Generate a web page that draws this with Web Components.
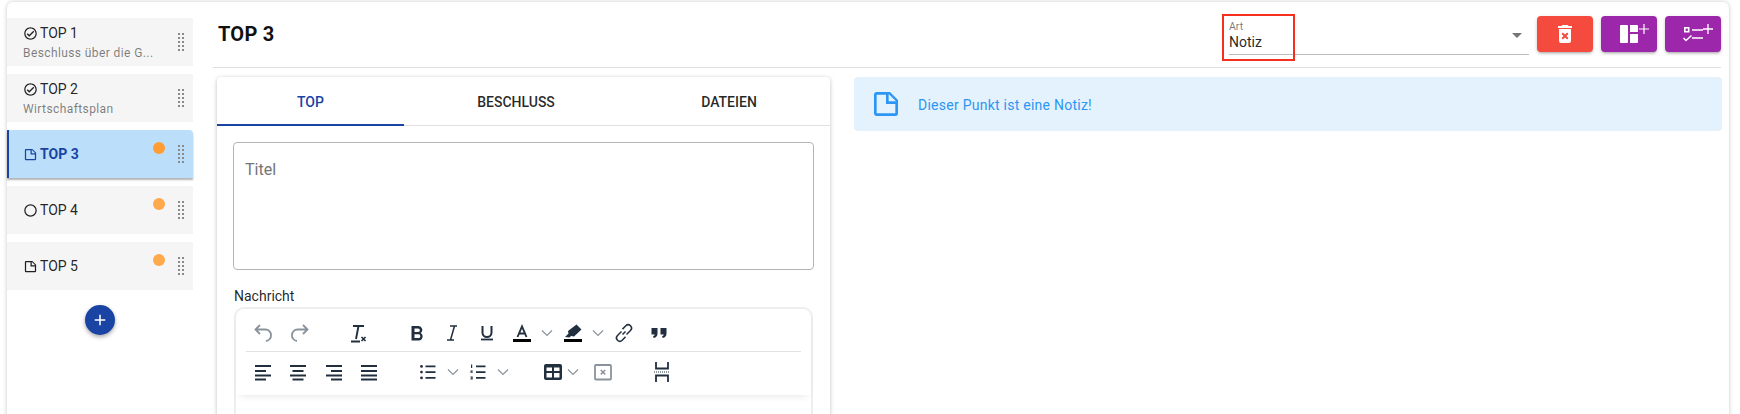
<!DOCTYPE html>
<html lang="de">
<head>
<meta charset="utf-8">
<title>TOP 3</title>
<style>
  html, body { margin: 0; height: 100%; overflow: hidden; background: #fff; }
  body { font-family: Roboto, "Liberation Sans", sans-serif; color: rgba(0,0,0,.87); }
</style>
</head>
<body>
<agenda-page></agenda-page>

<script>
// mdi paths used in more than one place
const ICONS = {
  check: 'M12 2C6.5 2 2 6.5 2 12S6.5 22 12 22 22 17.5 22 12 17.5 2 12 2M12 20C7.59 20 4 16.41 4 12S7.59 4 12 4 20 7.59 20 12 16.41 20 12 20M16.59 7.58L10 14.17L7.41 11.59L6 13L10 17L18 9L16.59 7.58Z',
  circle: 'M12,20A8,8 0 0,1 4,12A8,8 0 0,1 12,4A8,8 0 0,1 20,12A8,8 0 0,1 12,20M12,2A10,10 0 0,0 2,12A10,10 0 0,0 12,22A10,10 0 0,0 22,12A10,10 0 0,0 12,2Z',
  note: 'M14,10H19.5L14,4.5V10M5,3H15L21,9V19A2,2 0 0,1 19,21H5C3.89,21 3,20.1 3,19V5C3,3.89 3.89,3 5,3M5,5V19H19V12H12V5H5Z',
  drag: 'M9,3H11V5H9V3M13,3H15V5H13V3M9,7H11V9H9V7M13,7H15V9H13V7M9,11H11V13H9V11M13,11H15V13H13V11M9,15H11V17H9V15M13,15H15V17H13V15M9,19H11V21H9V19M13,19H15V21H13V19Z',
  trash: 'M6,19A2,2 0 0,0 8,21H16A2,2 0 0,0 18,19V7H6V19M8.46,11.88L9.87,10.47L12,12.59L14.12,10.47L15.53,11.88L13.41,14L15.53,16.12L14.12,17.53L12,15.41L9.87,17.53L8.46,16.12L10.59,14L8.46,11.88M15.5,4L14.5,3H9.5L8.5,4H5V6H19V4H15.5Z',
  plus: 'M19,13H13V19H11V13H5V11H11V5H13V11H19V13Z'
};

const svg = (d, size, fill = 'currentColor') =>
  `<svg width="${size}" height="${size}" viewBox="0 0 24 24" fill="${fill}"><path d="${d}"/></svg>`;

// toolbar glyphs of the editor, all on a 24 box
const TOOLS = {
  undo: '<path d="M9 4 4.500 8.500 9 13M5 8.500h9.500a5.500 5.500 0 0 1 5.500 5.500 5.500 5.500 0 0 1-5 6" fill="none" stroke="#8a939c" stroke-width="1.800"/>',
  redo: '<path d="M15 4l4.500 4.500L15 13M19 8.500H9.500A5.500 5.500 0 0 0 4 14a5.500 5.500 0 0 0 5 6" fill="none" stroke="#8a939c" stroke-width="1.800"/>',
  clear: '<path d="M7 5h11M12.500 5 10 18M5 20.500h9" fill="none" stroke="#222f3e" stroke-width="1.900"/><path d="m15.500 16 4 4m0-4-4 4" fill="none" stroke="#222f3e" stroke-width="1.700"/>',
  bold: '<path d="M6.500 5h7a3.800 3.800 0 0 1 2 7 4 4 0 0 1-1.500 7.500H6.500ZM9.500 7.500v3.600h3.600a1.800 1.800 0 0 0 0-3.600ZM9.500 13.300v3.700h4a1.850 1.850 0 0 0 0-3.700Z" fill="#222f3e" fill-rule="evenodd"/>',
  italic: '<path d="M10 5h7M14.500 5 10.500 19M7 19h7" fill="none" stroke="#222f3e" stroke-width="1.500"/>',
  under: '<path d="M7.500 5v6.500a4.500 4.500 0 0 0 9 0V5" fill="none" stroke="#222f3e" stroke-width="2"/><path d="M6 18.500h12" stroke="#222f3e" stroke-width="1.800"/>',
  color: '<path d="M7.500 16 12 5.500 16.500 16M9 12.500h6" fill="none" stroke="#222f3e" stroke-width="1.900"/><path d="M3 18h18v3H3z" fill="#000"/>',
  mark: '<path d="M15.500 3.500 20.500 8.500l-7.500 7-3-.5-1.500 1.500-4.500-.5 3.500-3.500-.5-2.500z" fill="#222f3e"/><path d="M3 18h18v3H3z" fill="#000"/>',
  link: '<path d="m10.500 13.500 3-3M9.500 10.500 5.500 14.500a3.300 3.300 0 0 0 4.700 4.700l3.300-3.300M14.500 13.500l4-4a3.300 3.300 0 0 0-4.700-4.700L10.500 8.100" fill="none" stroke="#222f3e" stroke-width="1.500"/>',
  quote: '<path d="M4.500 7h6v5.500c0 2.500-1.300 4-3.800 4.500l-.7-1.700c1.100-.3 1.700-.9 1.800-1.800H4.500zM13.500 7h6v5.500c0 2.500-1.300 4-3.800 4.500l-.7-1.700c1.100-.3 1.700-.9 1.800-1.800h-3.300z" fill="#222f3e"/>',
  left: '<path d="M4 5h16v2H4zM4 10h11v2H4zM4 14.500h16v2H4zM4 18.500h11v2H4z" fill="#222f3e"/>',
  center: '<path d="M4 5h16v2H4zM6.500 10h11v2h-11zM4 14.500h16v2H4zM6.500 18.500h11v2h-11z" fill="#222f3e"/>',
  right: '<path d="M4 5h16v2H4zM9 10h11v2H9zM4 14.500h16v2H4zM9 18.500h11v2H9z" fill="#222f3e"/>',
  justify: '<path d="M4 5h16v2H4zM4 10h16v2H4zM4 14.500h16v2H4zM4 18.500h16v2H4z" fill="#222f3e"/>',
  ul: '<path d="M9.500 5.500h10v1.800h-10zM9.500 11.200h10V13h-10zM9.500 17h10v1.800h-10z" fill="#222f3e"/><circle cx="5.500" cy="6.400" r="1.400" fill="#222f3e"/><circle cx="5.500" cy="12.100" r="1.400" fill="#222f3e"/><circle cx="5.500" cy="17.900" r="1.400" fill="#222f3e"/>',
  ol: '<path d="M10 5.500h9.500v1.800H10zM10 11.200h9.500V13H10zM10 17h9.500v1.800H10z" fill="#222f3e"/><path d="M5 4.500h1.200v3.500H5zM4.500 10.500h2.200v.9H5.400v.4h1.300v.9H4.500zM4.500 16.500h2.200v3H4.500v-.8h1.300v-.3H4.700v-.7h1.100v-.3H4.500z" fill="#222f3e"/>',
  table: '<path d="M5 4h14a2 2 0 0 1 2 2v12a2 2 0 0 1-2 2H5a2 2 0 0 1-2-2V6a2 2 0 0 1 2-2Zm.500 3.500v3.500h5.500V7.500Zm7.500 0v3.500h5.500V7.500Zm-7.500 5.500v4.500h5.500V13Zm7.500 0v4.500h5.500V13Z" fill="#222f3e" fill-rule="evenodd"/>',
  deltable: '<rect x="4" y="5" width="16" height="14.500" rx="1" fill="none" stroke="#8a939c" stroke-width="1.800"/><path d="m9.800 10 4.400 4.400m0-4.400-4.400 4.400" fill="none" stroke="#8a939c" stroke-width="1.500"/>',
  pagebreak: '<path d="M6 2v6.500h12V2M6 22v-6.500h12V22" fill="none" stroke="#222f3e" stroke-width="1.800"/><path d="M4 12h16" stroke="#222f3e" stroke-width="1.200" stroke-dasharray="1 1"/>',
  chevron: '<path d="m7 9.500 5 5 5-5" fill="none" stroke="#8a939c" stroke-width="1.200"/>'
};

class AgendaItem extends HTMLElement {
  constructor() {
    super();
    this.attachShadow({ mode: 'open' });
    const icon = this.getAttribute('icon');
    const sub = this.getAttribute('sub');
    this.shadowRoot.innerHTML = `
      <style>
        :host { display: flex; position: relative; box-sizing: border-box; height: 48px; padding-left: 16px;
          align-items: center; background: #f5f5f5; color: rgba(0,0,0,.87); }
        :host([active]) { background: #bbdefb; color: #1a44a3; border-left: 2px solid #1a44a3; padding-left: 14px;
          border-radius: 0 4px 0 0; box-shadow: 0 2px 2px rgba(0,0,0,.3); }
        .text { flex: 1; min-width: 0; }
        .head { display: flex; align-items: center; gap: 2px; font-size: 14px; line-height: 18px; }
        :host([active]) .head { font-weight: 700; }
        .head svg { flex: none; margin-top: 1px; }
        .sub { font-size: 12px; line-height: 16px; margin-top: 3px; letter-spacing: .4px; color: rgba(0,0,0,.5); white-space: nowrap; }
        .dot { position: absolute; right: 28px; top: 12px; width: 12px; height: 12px; border-radius: 50%; background: #ffa94d; }
        :host([active]) .dot { background: #ff9d33; }
        .drag { flex: none; width: 24px; display: flex; color: #8a8a8a; }
      </style>
      <div class="text">
        <div class="head">${svg(ICONS[icon], 15)}<span><slot></slot></span></div>
        ${sub ? `<div class="sub">${sub}</div>` : ''}
      </div>
      ${this.hasAttribute('dot') ? '<span class="dot"></span>' : ''}
      <span class="drag">${svg(ICONS.drag, 24)}</span>`;
  }
}
customElements.define('agenda-item', AgendaItem);

class AgendaSidebar extends HTMLElement {
  constructor() {
    super();
    this.attachShadow({ mode: 'open' });
    this.shadowRoot.innerHTML = `
      <style>
        :host { display: flex; flex-direction: column; flex: none; width: 186px; padding-top: 16px; gap: 8px; }
        .add { align-self: center; width: 30px; height: 30px; margin-top: 7px; border-radius: 50%; background: #1a44a3; color: #fff;
          display: flex; align-items: center; justify-content: center; box-shadow: 0 2px 4px rgba(0,0,0,.35); }
      </style>
      <slot></slot>
      <span class="add">${svg(ICONS.plus, 18)}</span>`;
  }
}
customElements.define('agenda-sidebar', AgendaSidebar);

class ArtSelect extends HTMLElement {
  constructor() {
    super();
    this.attachShadow({ mode: 'open' });
    this.shadowRoot.innerHTML = `
      <style>
        :host { display: block; position: relative; box-sizing: border-box; width: 300px; height: 37px; border-bottom: 1px solid #bdbdbd; }
        .label { font-size: 10.5px; line-height: 12px; padding-top: 3px; color: rgba(0,0,0,.55); }
        .value { font-size: 14px; line-height: 18px; }
        .caret { position: absolute; right: 7px; top: 15px; border: 5px solid transparent; border-top-color: #757575; border-bottom: 0; }
        .mark { position: absolute; left: -7px; top: -4px; width: 73px; height: 47px; box-sizing: border-box; border: 2px solid #f5301f; }
      </style>
      <div class="label">Art</div>
      <div class="value"><slot></slot></div>
      <span class="caret"></span>
      <span class="mark"></span>`;
  }
}
customElements.define('art-select', ArtSelect);

class ActionButton extends HTMLElement {
  constructor() {
    super();
    this.attachShadow({ mode: 'open' });
    this.shadowRoot.innerHTML = `
      <style>
        :host { display: flex; width: 56px; height: 36px; border-radius: 4px; background: #9c27ab; color: #fff;
          align-items: center; justify-content: center;
          box-shadow: 0 2px 3px -1px rgba(0,0,0,.3), 0 1px 4px rgba(0,0,0,.12); }
        :host([color=red]) { background: #f44b3e; }
      </style>
      <slot></slot>`;
  }
}
customElements.define('action-button', ActionButton);

class TabBar extends HTMLElement {
  constructor() {
    super();
    this.attachShadow({ mode: 'open' });
    const tabs = ['TOP', 'Beschluss', 'Dateien'];
    this.shadowRoot.innerHTML = `
      <style>
        :host { display: grid; grid-template-columns: 187px 224px 1fr; height: 48px; border-bottom: 1px solid #e0e0e0; }
        div { display: flex; align-items: center; justify-content: center; box-sizing: border-box; height: 49px;
          font-size: 14px; font-weight: 500; text-transform: uppercase; color: rgba(0,0,0,.85); }
        .on { color: #1a44a3; box-shadow: inset 0 -2px 0 #1a44a3; }
      </style>
      ${tabs.map((t, i) => `<div class="${i ? '' : 'on'}">${t}</div>`).join('')}`;
  }
}
customElements.define('tab-bar', TabBar);

class TextBox extends HTMLElement {
  constructor() {
    super();
    this.attachShadow({ mode: 'open' });
    this.shadowRoot.innerHTML = `
      <style>
        :host { display: block; box-sizing: border-box; height: 128px; padding: 15px 11px; border: 1px solid #b5b5b5; border-radius: 4px;
          font-size: 16px; line-height: 24px; color: #757575; }
      </style>
      <slot></slot>`;
  }
}
customElements.define('text-box', TextBox);

class RichEditor extends HTMLElement {
  constructor() {
    super();
    this.attachShadow({ mode: 'open' });
    // [icon, left margin] of each toolbar button
    const row1 = [['undo', 5], ['redo', 13], ['clear', 34], ['bold', 35], ['italic', 11], ['under', 11], ['color', 11],
      ['chevron', 1], ['mark', 2], ['chevron', 1], ['link', 2], ['quote', 11]];
    const row2 = [['left', 5], ['center', 11], ['right', 12], ['justify', 11], ['ul', 35], ['chevron', 1], ['ol', 1],
      ['chevron', 1], ['table', 26], ['chevron', -4], ['deltable', 6], ['pagebreak', 35]];
    const row = r => r.map(([name, ml]) =>
      `<svg style="margin-left:${ml}px" width="24" height="24" viewBox="0 0 24 24">${TOOLS[name]}</svg>`).join('');
    this.shadowRoot.innerHTML = `
      <style>
        :host { display: block; box-sizing: border-box; height: 200px; border: 2px solid #eee; border-bottom: 0; border-radius: 10px 10px 0 0; }
        .bar { padding: 0 10px; box-shadow: 0 4px 8px -4px rgba(0,0,0,.12); }
        .row { display: flex; align-items: center; box-sizing: border-box; height: 43px; padding-bottom: 3px; }
        .row.one { border-bottom: 1px solid #e2e2e2; padding: 5px 0 0; }
        .row svg { flex: none; }
      </style>
      <div class="bar">
        <div class="row one">${row(row1)}</div>
        <div class="row">${row(row2)}</div>
      </div>`;
  }
}
customElements.define('rich-editor', RichEditor);

class InfoAlert extends HTMLElement {
  constructor() {
    super();
    this.attachShadow({ mode: 'open' });
    this.shadowRoot.innerHTML = `
      <style>
        :host { display: flex; box-sizing: border-box; height: 54px; padding: 0 16px; gap: 16px; align-items: center;
          background: #e3f2fc; color: #2d96f3; border-radius: 4px; font-size: 14px; letter-spacing: .25px; }
        svg { flex: none; }
        span { padding-top: 2px; }
      </style>
      ${svg(ICONS.note, 32)}
      <span><slot></slot></span>`;
  }
}
customElements.define('info-alert', InfoAlert);

class AgendaPage extends HTMLElement {
  constructor() {
    super();
    this.attachShadow({ mode: 'open' });
    this.shadowRoot.innerHTML = `
      <style>
        :host { display: block; box-sizing: border-box; height: 414px; padding: 2px 11px 0 7px; overflow: hidden; }
        .card { display: flex; height: 500px; gap: 20px; border-radius: 6px 6px 0 0; background: #fff;
          box-shadow: 0 0 4px rgba(0,0,0,.22); padding-right: 8px; }
        .main { flex: 1; min-width: 0; }
        header { display: flex; align-items: center; box-sizing: border-box; height: 66px; border-bottom: 1px solid #e0e0e0; padding: 0 0 0 5px; }
        h1 { flex: 1; margin: -2px 0 0; font-size: 20px; line-height: 30px; font-weight: 700; letter-spacing: .25px; color: #111; }
        .actions { display: flex; gap: 8px; margin-left: 8px; margin-top: -2px; }
        art-select { margin-top: 3px; }
        .columns { display: grid; grid-template-columns: 613px 868px; gap: 24px; padding: 9px 0 0 4px; }
        .panel { background: #fff; border-radius: 4px 4px 0 0; box-shadow: 0 1px 4px rgba(0,0,0,.25); height: 400px; }
        .body { padding: 16px; }
        .label { font-size: 14px; line-height: 20px; margin: 16px 0 1px 1px; }
        rich-editor { margin: 0 1px; }
      </style>
      <div class="card">
        <agenda-sidebar>
          <agenda-item icon="check" sub="Beschluss über die G...">TOP 1</agenda-item>
          <agenda-item icon="check" sub="Wirtschaftsplan">TOP 2</agenda-item>
          <agenda-item icon="note" active dot>TOP 3</agenda-item>
          <agenda-item icon="circle" dot>TOP 4</agenda-item>
          <agenda-item icon="note" dot>TOP 5</agenda-item>
        </agenda-sidebar>
        <div class="main">
          <header>
            <h1>TOP 3</h1>
            <art-select>Notiz</art-select>
            <div class="actions">
              <action-button color="red">${svg(ICONS.trash, 24)}</action-button>
              <action-button>
                <svg width="40" height="24" viewBox="0 0 40 24" fill="#fff">
                  <path d="M12 3h6a1 1 0 0 1 1 1v16a1 1 0 0 1-1 1h-6a1 1 0 0 1-1-1V4a1 1 0 0 1 1-1Z"/>
                  <path d="M21 3h7a1 1 0 0 1 1 1v6h-8ZM21 12h8v8a1 1 0 0 1-1 1h-7Z"/>
                  <path d="M34.400 2h1.200v4.400H40v1.200h-4.400V12h-1.200V7.600H30V6.400h4.400Z"/>
                </svg>
              </action-button>
              <action-button>
                <svg width="40" height="24" viewBox="0 0 40 24" fill="none" stroke="#fff">
                  <rect x="11.800" y="5.800" width="3.900" height="3.900" stroke-width="1.600"/>
                  <path d="M19 8h11M19 16h11" stroke-width="1.700"/>
                  <path d="m10.500 16 2.500 2.500 5.500-5" stroke-width="1.500"/>
                  <path d="M35 2v10M30 7h10" stroke-width="1.300"/>
                </svg>
              </action-button>
            </div>
          </header>
          <div class="columns">
            <section class="panel">
              <tab-bar></tab-bar>
              <div class="body">
                <text-box>Titel</text-box>
                <div class="label">Nachricht</div>
                <rich-editor></rich-editor>
              </div>
            </section>
            <div><info-alert>Dieser Punkt ist eine Notiz!</info-alert></div>
          </div>
        </div>
      </div>`;
  }
}
customElements.define('agenda-page', AgendaPage);
</script>
</body>
</html>
